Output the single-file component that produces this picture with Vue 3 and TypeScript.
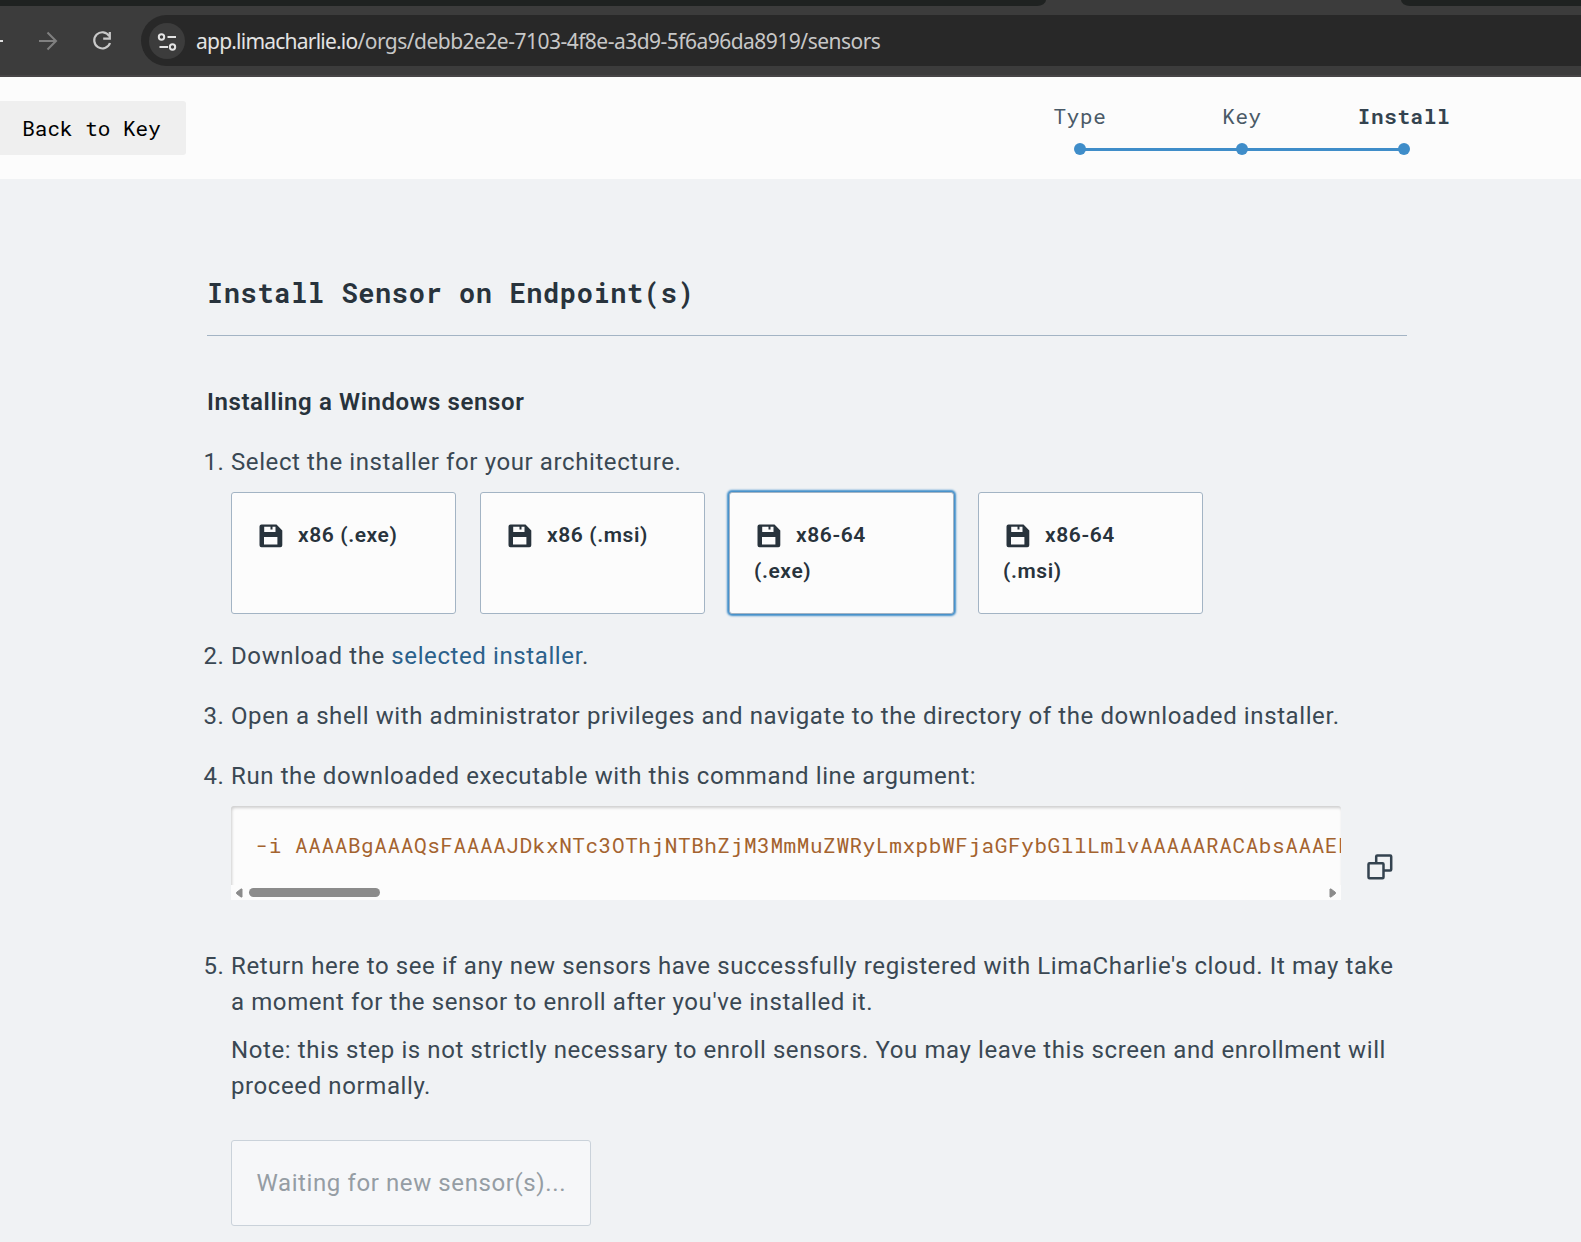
<script setup lang="ts">
interface Installer {
  arch: string
  ext: string
}

const steps: string[] = ['Type', 'Key', 'Install']
const currentStep = 'Install'

const installers: Installer[] = [
  { arch: 'x86', ext: '(.exe)' },
  { arch: 'x86', ext: '(.msi)' },
  { arch: 'x86-64', ext: '(.exe)' },
  { arch: 'x86-64', ext: '(.msi)' },
]
const selected = 2

const command =
  '-i AAAABgAAAQsFAAAAJDkxNTc3OThjNTBhZjM3MmMuZWRyLmxpbWFjaGFybGllLmlvAAAAARACAbsAAAEF'
</script>

<template>
  <div class="window">
    <div class="chrome">
      <div class="tabs">
        <span class="tab-left"></span>
        <span class="tab-right"></span>
      </div>
      <div class="toolbar">
        <svg class="nav" width="141" height="51" viewBox="0 15 141 51" fill="none" stroke-width="2">
          <path d="M0 41H3" stroke="#dedede" />
          <path d="M39 41H56M47.5 32.5L56 41L47.5 49.500" stroke="#808080" />
          <path d="M109.300 36.200A8.100 8.100 0 1 0 110 43" stroke="#c9c9c9" stroke-width="2.200" />
          <path d="M109.800 32V38.600H103.200" stroke="#c9c9c9" stroke-width="2.200" />
        </svg>
        <div class="address">
          <span class="site-info">
            <svg width="36" height="36" viewBox="0 0 36 36" fill="none" stroke="#e3e3e3" stroke-width="2">
              <circle cx="12.500" cy="14" r="2.700" />
              <path d="M18.500 14H27M10.500 24H19" />
              <circle cx="23.500" cy="24" r="2.700" />
            </svg>
          </span>
          <span class="url"><b>app.limacharlie.io</b>/orgs/debb2e2e-7103-4f8e-a3d9-5f6a96da8919/sensors</span>
        </div>
      </div>
    </div>

    <header class="topbar">
      <button class="back">Back to Key</button>
      <ol class="stepper">
        <li v-for="step in steps" :key="step" :class="{ current: step === currentStep }">
          <span class="label">{{ step }}</span>
          <span class="track"><i></i></span>
        </li>
      </ol>
    </header>

    <main>
      <h1>Install Sensor on Endpoint(s)</h1>
      <h2>Installing a Windows sensor</h2>
      <ol class="guide">
        <li>
          Select the installer for your architecture.
          <div class="cards">
            <div
              v-for="(item, index) in installers"
              :key="index"
              class="card"
              :class="{ selected: index === selected }"
            >
              <svg class="disk" width="24" height="24" viewBox="0 0 24 24">
                <path
                  fill="#28333c"
                  fill-rule="evenodd"
                  d="M2.500 .6H17.500L23.300 6.400V21.300Q23.300 23.300 21.300 23.300H2.500Q.5 23.300 .5 21.300V2.600Q.5 .6 2.500 .6ZM5.200 2.700V8.100H16.500V2.700H13.500V5.500H11.500V2.700ZM5 12.900V20.500H18.400V12.900Z"
                />
              </svg>{{ item.arch }} {{ item.ext }}
            </div>
          </div>
        </li>
        <li>Download the <a>selected installer</a>.</li>
        <li>Open a shell with administrator privileges and navigate to the directory of the downloaded installer.</li>
        <li>
          Run the downloaded executable with this command line argument:
          <div class="command">
            <div class="code">
              <pre>{{ command }}</pre>
              <div class="scrollbar">
                <svg width="8" height="10" viewBox="0 0 8 10"><path fill="#8b8b8b" stroke="#8b8b8b" stroke-linejoin="round" d="M7 1V9H6L1.500 5.600V4.400L6 1Z" /></svg>
                <span class="thumb"></span>
                <svg width="8" height="10" viewBox="0 0 8 10"><path fill="#8b8b8b" stroke="#8b8b8b" stroke-linejoin="round" d="M1 1V9H2L6.500 5.600V4.400L2 1Z" /></svg>
              </div>
            </div>
            <svg class="copy" width="26" height="26" viewBox="0 0 26 26" fill="none" stroke="#34434f" stroke-width="2.500">
              <rect x="1.500" y="9.300" width="15" height="15" rx="1" />
              <path d="M9.200 9V2.500Q9.200 1.500 10.200 1.500H23.200Q24.200 1.500 24.200 2.500V15.500Q24.200 16.500 23.200 16.500H17" />
            </svg>
          </div>
        </li>
        <li>
          Return here to see if any new sensors have successfully registered with LimaCharlie's cloud. It may take
          a moment for the sensor to enroll after you've installed it.
          <p>
            Note: this step is not strictly necessary to enroll sensors. You may leave this screen and enrollment will
            proceed normally.
          </p>
          <div class="waiting">Waiting for new sensor(s)...</div>
        </li>
      </ol>
    </main>
  </div>
</template>

<style>
body {
  margin: 0;
  background: #f0f2f4;
}
</style>

<style scoped>
.window {
  width: 1581px;
  height: 1242px;
  overflow: hidden;
  background: #f0f2f4;
  color: #3a4853;
  font: 24px/36px Roboto, sans-serif;
  letter-spacing: 0.6px;
}
.chrome {
  box-sizing: border-box;
  height: 77px;
  background: #3c3c3c;
  border-bottom: 2px solid #474546;
}
.tabs {
  display: flex;
  justify-content: space-between;
  height: 6px;
}
.tab-left,
.tab-right {
  background: #1f2221;
}
.tab-left {
  width: 1046px;
  border-bottom-right-radius: 12px 8px;
}
.tab-right {
  width: 180px;
  border-bottom-left-radius: 12px 8px;
}
.toolbar {
  display: flex;
  margin-top: 9px;
}
.address {
  display: flex;
  flex: 1;
  align-items: center;
  height: 51px;
  background: #282828;
  border-radius: 26px 0 0 26px;
}
.site-info {
  display: flex;
  width: 36px;
  height: 36px;
  margin: 0 11px 0 8px;
  background: #3c3c3c;
  border-radius: 50%;
}
.url {
  color: #c7c7c7;
  font: 21px/30px 'Noto Sans', sans-serif;
  letter-spacing: -0.52px;
  white-space: nowrap;
}
.url b {
  color: #e3e3e3;
  font-weight: 400;
  letter-spacing: -0.78px;
}
.topbar {
  display: flex;
  justify-content: space-between;
  height: 102px;
  background: #fcfcfc;
}
.back {
  width: 186px;
  height: 54px;
  margin: 24px 0 0;
  padding: 0 3px 0 0;
  background: #efefef;
  border: 0;
  border-radius: 0 3px 3px 0;
  color: #000;
  font: 21px 'Roboto Mono', 'DejaVu Sans Mono', monospace;
}
.stepper {
  display: flex;
  margin: 23px 96px 0 0;
  padding: 0;
  list-style: none;
  font: 21px/32px 'Roboto Mono', 'DejaVu Sans Mono', monospace;
}
.stepper li {
  width: 162px;
  text-align: center;
}
.label {
  display: block;
  color: #4a5a67;
}
.current .label {
  color: #34434f;
  font-weight: 700;
}
.track {
  display: flex;
  align-items: center;
  justify-content: center;
  height: 12px;
  margin-top: 11px;
  background: linear-gradient(#3f8dc9, #3f8dc9) center / 100% 3px no-repeat;
}
.stepper li:first-child .track {
  background-position: right center;
  background-size: 50% 3px;
}
.stepper li:last-child .track {
  background-position: left center;
  background-size: 50% 3px;
}
.track i {
  width: 12px;
  height: 12px;
  background: #3f8dc9;
  border-radius: 50%;
}
main {
  width: 1200px;
  margin: 95px 0 0 207px;
}
h1 {
  margin: 0;
  padding-bottom: 23px;
  border-bottom: 1px solid #a3b4c4;
  color: #28333c;
  font: 700 27px/38px 'Roboto Mono', 'DejaVu Sans Mono', monospace;
}
h2 {
  margin: 48px 0 0;
  color: #28333c;
  font-size: 24px;
  font-weight: 600;
}
.guide {
  margin: 24px 0 0;
  padding-left: 24px;
}
.guide > li + li {
  margin-top: 24px;
}
.cards {
  display: flex;
  gap: 24px;
  margin-top: 12px;
}
.card {
  box-sizing: border-box;
  width: 225px;
  height: 122px;
  padding: 24px 30px 24px 24px;
  background: #fcfcfc;
  border: 1px solid #a3b4c4;
  border-radius: 3px;
  color: #28333c;
  font-size: 21px;
  font-weight: 600;
}
.card.selected {
  box-shadow: 0 0 2px 2px #3f8dc9;
}
.disk {
  margin: 0 15px 0 3px;
  vertical-align: -6px;
}
a {
  color: #2b618b;
}
.command {
  display: flex;
  gap: 26px;
  align-items: center;
  margin-top: 12px;
}
.guide > li:nth-child(4) {
  margin-bottom: 48px;
}
.code {
  width: 1110px;
  height: 94px;
  overflow: hidden;
  background: #fcfcfc;
  border-radius: 3px 3px 0 0;
  box-shadow: inset 1px 2px 3px rgba(0, 0, 0, 0.18);
}
.code pre {
  height: 79px;
  margin: 0;
  padding-left: 24.5px;
  color: #a4632f;
  font: 21px/79px 'Roboto Mono', 'DejaVu Sans Mono', monospace;
}
.scrollbar {
  display: flex;
  align-items: center;
  height: 15px;
  padding: 0 4px;
  background: #fcfcfc;
}
.thumb {
  width: 131px;
  height: 9px;
  margin: 0 auto 0 6px;
  background: #8b8b8b;
  border-radius: 5px;
}
.copy {
  position: relative;
  top: 14px;
}
p {
  margin: 12px 0 0;
}
.waiting {
  box-sizing: border-box;
  width: 360px;
  height: 86px;
  margin-top: 36px;
  padding: 24px 20px 24px 24.5px;
  background: #f6f7f9;
  border: 1px solid #cad2da;
  border-radius: 3px;
  color: #959da4;
  white-space: nowrap;
}
</style>
